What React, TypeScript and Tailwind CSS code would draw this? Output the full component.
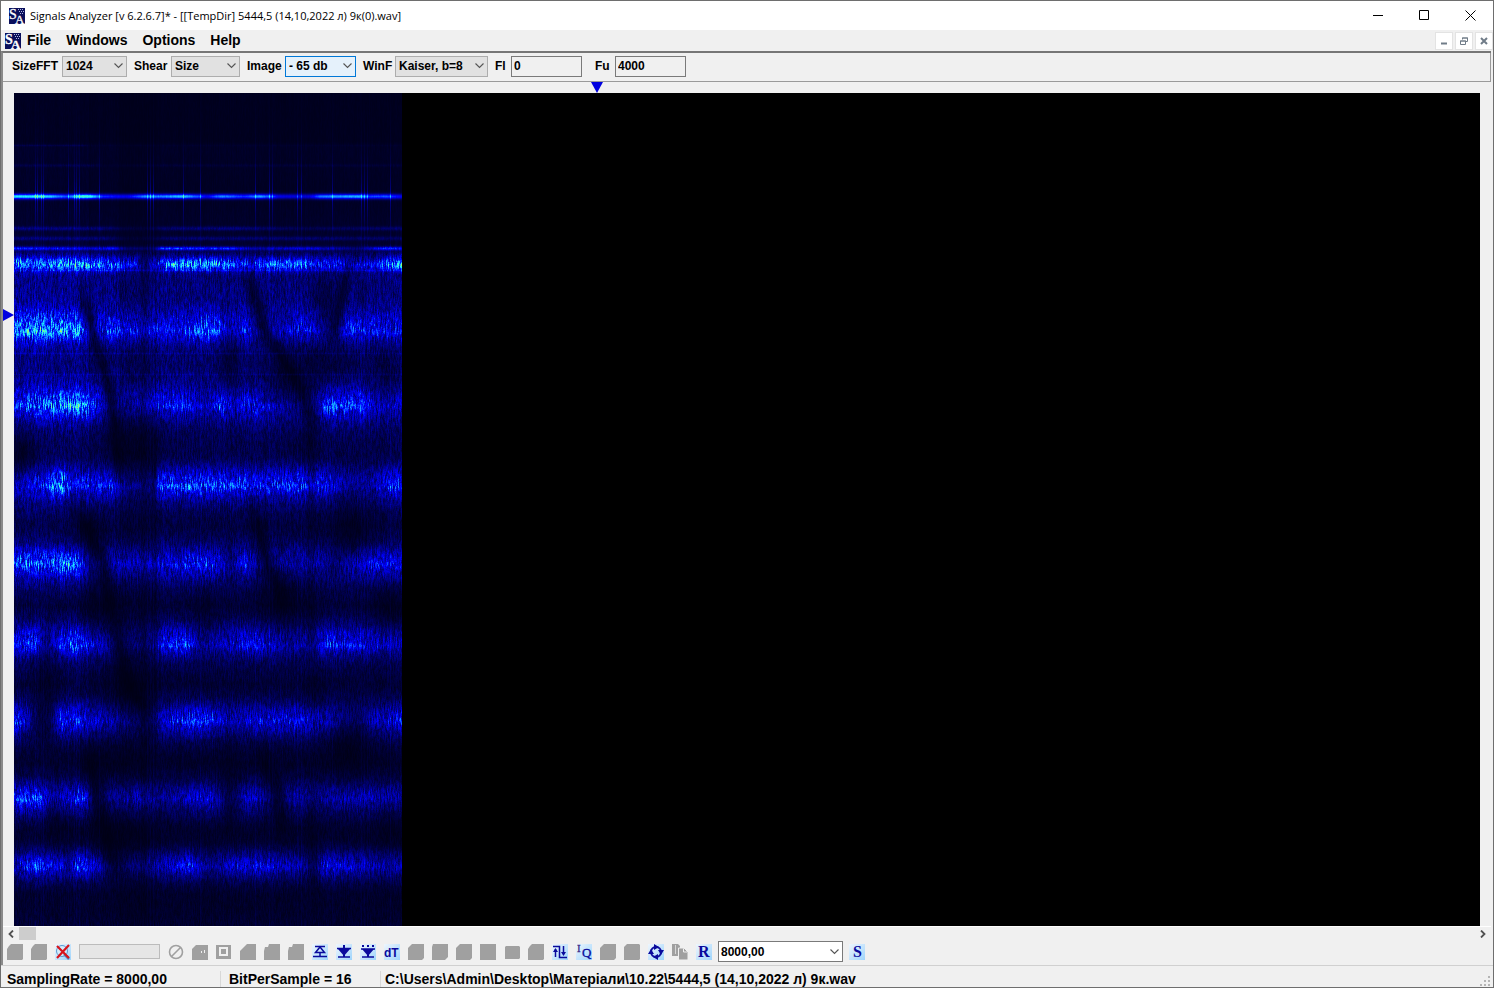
import { useEffect, useRef, type ReactNode } from "react";

type Point = [number, number];

interface Band {
  y: number;
  up: number;
  down: number;
  ridge: number;
  amp: Point[];
}

const VIEW_W = 388;
const VIEW_H = 833;

// level of the background over the height of the view
const FLOOR: Point[] = [
  [0, 0.03], [48, 0.03], [52, 0.045], [100, 0.04], [150, 0.06], [160, 0.12], [175, 0.2], [215, 0.2],
  [260, 0.17], [300, 0.19], [345, 0.13], [365, 0.1], [385, 0.17], [415, 0.13], [432, 0.09], [455, 0.15],
  [490, 0.13], [512, 0.07], [540, 0.14], [575, 0.1], [590, 0.07], [620, 0.13], [655, 0.07], [670, 0.05],
  [700, 0.12], [735, 0.05], [750, 0.05], [775, 0.1], [800, 0.05], [815, 0.05], [833, 0.06],
];

const BANDS: Band[] = [
  { y: 170, up: 7, down: 7, ridge: 3, amp: [[0, 0.7], [20, 0.56], [40, 0.66], [85, 0.64], [100, 0.46], [122, 0.38], [130, 0.1], [142, 0.3], [155, 0.64], [185, 0.72], [215, 0.56], [235, 0.36], [260, 0.56], [290, 0.52], [325, 0.46], [335, 0.22], [360, 0.3], [372, 0.64], [388, 0.66]] },
  { y: 236, up: 19, down: 14, ridge: 4, amp: [[0, 0.54], [30, 0.6], [68, 0.54], [78, 0.25], [90, 0.36], [100, 0.38], [118, 0.36], [150, 0.28], [170, 0.36], [190, 0.52], [205, 0.48], [215, 0.2], [232, 0.36], [245, 0.06], [270, 0.26], [300, 0.36], [312, 0.1], [322, 0.04], [332, 0.36], [360, 0.36], [388, 0.3]] },
  { y: 311, up: 17, down: 17, ridge: 3, amp: [[0, 0.34], [20, 0.46], [45, 0.58], [70, 0.56], [85, 0.36], [100, 0.14], [132, 0.34], [165, 0.38], [190, 0.18], [208, 0.42], [220, 0.22], [240, 0.4], [285, 0.14], [302, 0.2], [310, 0.46], [345, 0.44], [362, 0.22], [388, 0.24]] },
  { y: 391, up: 18, down: 16, ridge: 3, amp: [[0, 0.2], [15, 0.3], [32, 0.34], [37, 0.6], [48, 0.64], [58, 0.24], [75, 0.36], [95, 0.42], [110, 0.2], [140, 0.12], [144, 0.5], [175, 0.48], [210, 0.46], [240, 0.36], [280, 0.46], [310, 0.36], [335, 0.12], [360, 0.2], [372, 0.42], [388, 0.4]] },
  { y: 469, up: 14, down: 17, ridge: 3, amp: [[0, 0.54], [30, 0.48], [52, 0.68], [66, 0.52], [76, 0.12], [95, 0.24], [120, 0.32], [150, 0.32], [190, 0.46], [205, 0.34], [215, 0.1], [230, 0.38], [245, 0.12], [265, 0.22], [300, 0.28], [320, 0.06], [340, 0.28], [360, 0.42], [388, 0.34]] },
  { y: 550, up: 18, down: 14, ridge: 3, amp: [[0, 0.4], [20, 0.46], [32, 0.12], [42, 0.32], [60, 0.58], [72, 0.42], [95, 0.24], [110, 0.1], [130, 0.12], [150, 0.38], [168, 0.54], [185, 0.2], [210, 0.26], [245, 0.4], [275, 0.2], [300, 0.2], [308, 0.38], [335, 0.4], [388, 0.24]] },
  { y: 626, up: 15, down: 17, ridge: 3, amp: [[0, 0.5], [15, 0.3], [28, 0.04], [38, 0.08], [44, 0.46], [65, 0.42], [95, 0.28], [122, 0.16], [135, 0.04], [145, 0.3], [185, 0.54], [215, 0.26], [250, 0.34], [290, 0.38], [320, 0.2], [345, 0.06], [358, 0.26], [388, 0.4]] },
  { y: 704, up: 14, down: 17, ridge: 3, amp: [[0, 0.52], [25, 0.5], [38, 0.16], [55, 0.34], [70, 0.5], [80, 0.06], [105, 0.2], [125, 0.32], [145, 0.14], [165, 0.22], [195, 0.4], [215, 0.08], [235, 0.3], [260, 0.06], [280, 0.2], [310, 0.16], [350, 0.26], [388, 0.22]] },
  { y: 771, up: 14, down: 15, ridge: 4, amp: [[0, 0.28], [20, 0.46], [40, 0.4], [54, 0.18], [66, 0.58], [78, 0.38], [95, 0.1], [125, 0.16], [150, 0.28], [175, 0.44], [195, 0.16], [215, 0.32], [250, 0.38], [290, 0.2], [302, 0.1], [308, 0.38], [345, 0.3], [388, 0.22]] },
];

// steady carriers: y, thickness, level along x
const CARRIERS: { y: number; s: number; amp: Point[] }[] = [
  { y: 103, s: 2.6, amp: [[0, 0.78], [25, 0.82], [38, 0.72], [52, 0.54], [68, 0.9], [76, 0.86], [88, 0.5], [112, 0.4], [130, 0.66], [148, 0.64], [168, 0.76], [185, 0.54], [192, 0.4], [206, 0.66], [230, 0.5], [245, 0.7], [258, 0.54], [264, 0.38], [295, 0.36], [306, 0.64], [345, 0.72], [355, 0.52], [372, 0.58], [388, 0.38]] },
  { y: 52, s: 1, amp: [[0, 0.05], [68, 0.06], [76, 0.01], [388, 0.01]] },
  { y: 72, s: 1.5, amp: [[0, 0.05], [75, 0.06], [90, 0.01], [160, 0.03], [388, 0.03]] },
  { y: 135, s: 2, amp: [[0, 0.16], [90, 0.13], [110, 0.04], [135, 0.04], [160, 0.14], [230, 0.14], [290, 0.06], [388, 0.12]] },
  { y: 145, s: 2, amp: [[0, 0.14], [90, 0.12], [110, 0.03], [135, 0.03], [160, 0.12], [388, 0.1]] },
  { y: 155, s: 1.8, amp: [[0, 0.38], [100, 0.32], [112, 0.1], [140, 0.08], [146, 0.46], [215, 0.42], [240, 0.18], [290, 0.3], [345, 0.1], [372, 0.46], [388, 0.34]] },
  { y: 177, s: 1, amp: [[0, 0.1], [388, 0.1]] },
  { y: 260, s: 1, amp: [[0, 0.1], [70, 0.08], [388, 0.04]] },
  { y: 281, s: 1, amp: [[0, 0.08], [70, 0.06], [388, 0.04]] },
];

// fading paths: points, half width, depth
const FADES: { pts: Point[]; w: number; d: number }[] = [
  { pts: [[68, 197], [79, 244], [93, 287], [100, 330], [104, 380]], w: 7, d: 0.7 },
  { pts: [[62, 414], [80, 450], [89, 470], [99, 524], [109, 577], [129, 620]], w: 9, d: 0.65 },
  { pts: [[74, 660], [82, 700], [90, 735], [103, 785]], w: 9, d: 0.6 },
  { pts: [[234, 180], [249, 234], [266, 262], [286, 294], [299, 335]], w: 8, d: 0.65 },
  { pts: [[239, 414], [253, 470], [268, 506]], w: 8, d: 0.65 },
  { pts: [[246, 655], [262, 697], [270, 740]], w: 9, d: 0.55 },
  { pts: [[334, 175], [319, 240]], w: 6, d: 0.6 },
  { pts: [[347, 185], [348, 225]], w: 4, d: 0.4 },
  { pts: [[129, 152], [129, 830]], w: 4, d: 0.3 },
  { pts: [[140, 330], [140, 640]], w: 3, d: 0.3 },
  { pts: [[296, 340], [297, 560]], w: 5, d: 0.3 },
  { pts: [[297, 700], [297, 790]], w: 5, d: 0.3 },
];

// soft dark areas: x, y, radius x, radius y, depth
const HOLES: [number, number, number, number, number][] = [
  [215, 270, 11, 30, 0.55], [275, 285, 32, 32, 0.6], [312, 205, 15, 32, 0.55], [318, 270, 32, 22, 0.45],
  [372, 280, 16, 26, 0.45], [120, 350, 32, 38, 0.55], [6, 360, 18, 24, 0.7], [290, 350, 14, 18, 0.4],
  [75, 440, 20, 24, 0.5], [336, 436, 24, 30, 0.65], [268, 504, 26, 32, 0.65], [82, 515, 18, 32, 0.55],
  [376, 515, 20, 24, 0.55], [30, 590, 14, 34, 0.5], [112, 600, 26, 30, 0.55], [334, 655, 24, 28, 0.6],
  [26, 630, 12, 26, 0.5], [90, 665, 28, 22, 0.4], [215, 690, 12, 40, 0.4], [46, 732, 16, 18, 0.4],
  [100, 740, 26, 26, 0.4], [378, 735, 14, 20, 0.4], [190, 520, 14, 26, 0.35], [300, 600, 12, 22, 0.35],
];

const RAYS = [21, 23, 27, 29, 54, 60, 62, 65, 85, 133, 136, 139, 169, 186, 241, 255, 258, 283, 287, 318, 347, 350, 353, 376];

function lerp(pts: Point[], t: number) {
  if (t <= pts[0][0]) return pts[0][1];
  for (let i = 1; i < pts.length; i++) {
    if (t <= pts[i][0]) {
      const [a, va] = pts[i - 1];
      const [b, vb] = pts[i];
      return va + ((vb - va) * (t - a)) / (b - a);
    }
  }
  return pts[pts.length - 1][1];
}

function hash(x: number, y: number) {
  let h = Math.imul(x + 11, 374761393) ^ Math.imul(y + 7, 668265263);
  h = Math.imul(h ^ (h >>> 13), 1274126177);
  h = Math.imul(h ^ (h >>> 15), 2246822519);
  return ((h ^ (h >>> 16)) >>> 0) / 4294967296;
}

// noise that runs in short vertical strokes
function stroke(x: number, y: number) {
  const t = (y + hash(x, 77) * 5) / 3.5;
  const i = Math.floor(t);
  const f = t - i;
  return hash(x, 2000 + i) * (1 - f) + hash(x, 2001 + i) * f;
}

function shade(x: number, y: number) {
  let k = 1;
  for (const f of FADES) {
    const top = f.pts[0][1];
    const end = f.pts[f.pts.length - 1][1];
    if (y < top - 16 || y > end + 16) continue;
    const cx = lerp(f.pts.map(([px, py]) => [py, px] as Point), y);
    const edge = Math.min(1, (y - top + 16) / 32, (end + 16 - y) / 32);
    k *= 1 - f.d * edge * Math.exp(-(((x - cx) / f.w) ** 2));
  }
  for (const [hx, hy, rx, ry, d] of HOLES) {
    const q = ((x - hx) / rx) ** 2 + ((y - hy) / ry) ** 2;
    if (q < 6) k *= 1 - d * Math.exp(-q);
  }
  return k;
}

function palette(v: number): [number, number, number] {
  if (v < 0.48) return [0, 0, 16 + (v / 0.48) * 239];
  if (v < 0.85) {
    const t = (v - 0.48) / 0.37;
    return [t * 30, t * 240, 255];
  }
  const t = Math.min(1, (v - 0.85) / 0.3);
  return [30 + t * 150, 245, 255 - t * 170];
}

function drawSpectrum(ctx: CanvasRenderingContext2D) {
  const img = ctx.createImageData(VIEW_W, VIEW_H);
  for (let x = 0; x < VIEW_W; x++) {
    const amps = BANDS.map((b) => lerp(b.amp, x));
    const lines = CARRIERS.map((c) => lerp(c.amp, x));
    const column = 0.88 + 0.24 * hash(x, 9001);
    const ray = RAYS.includes(x) ? 1 : 0;
    const left = x < 75 ? 1.2 : x > 104 && x < 142 ? 0.8 : 1;
    for (let y = 0; y < VIEW_H; y++) {
      const grain = 0.75 * stroke(x, y) + 0.25 * hash(x, y);
      let v = lerp(FLOOR, y) * left;
      BANDS.forEach((b, i) => {
        const d = y - b.y;
        if (Math.abs(d) > 60) return;
        const s = d < 0 ? b.up : b.down;
        v += amps[i] * (0.67 * Math.exp(-((d / s) ** 2)) + 0.16 * Math.exp(-(((d - 2) / b.ridge) ** 2)));
      });
      const noisy = y > 158 ? 0.35 + 1.3 * grain : 0.75 + 0.5 * grain;
      v *= shade(x, y) * noisy * column;
      CARRIERS.forEach((c, i) => {
        const q = ((y - c.y) / c.s) ** 2;
        if (q < 8) v += lines[i] * Math.exp(-q) * (i === 0 ? 0.95 + 0.1 * grain : 0.6 + 0.8 * grain);
      });
      if (ray) v += 0.22 * Math.exp(-Math.abs(y - 103) / 24);
      if (ray && y > 150) v += 0.03;
      const [r, g, b] = palette(v);
      const o = (y * VIEW_W + x) * 4;
      img.data[o] = r;
      img.data[o + 1] = g;
      img.data[o + 2] = b;
      img.data[o + 3] = 255;
    }
  }
  ctx.putImageData(img, 0, 0);
}

function Spectrogram() {
  const ref = useRef<HTMLCanvasElement>(null);
  useEffect(() => {
    const ctx = ref.current?.getContext("2d");
    if (ctx) drawSpectrum(ctx);
  }, []);
  return <canvas ref={ref} width={VIEW_W} height={VIEW_H} className="block h-full w-[388px]" />;
}

function AppLogo() {
  return (
    <svg viewBox="0 0 16 16" className="size-4 shrink-0" aria-hidden="true">
      <rect width="16" height="16" fill="#0a0f5c" />
      <text x="0" y="11" fontFamily="Liberation Serif, serif" fontSize="14" fill="#fff" stroke="#fff" strokeWidth=".3">S</text>
      <text x="6" y="16" fontFamily="Liberation Serif, serif" fontSize="13" fill="#fff" stroke="#fff" strokeWidth=".3">A</text>
      <path d="M9 1h1M11 1h1M13 1h1M10 3h1M12 3h1M14 3h1M11 5h1M13 5h1" transform="translate(0 .5)" stroke="#b0b5e0" />
    </svg>
  );
}

function Chevron() {
  return (
    <svg viewBox="0 0 9 6" className="pointer-events-none absolute right-1 top-1/2 h-1.5 w-[9px] -translate-y-1/2" aria-hidden="true">
      <path d="M.5.5l4 4 4-4" fill="none" stroke="#555" strokeWidth="1.1" />
    </svg>
  );
}

function Combo({ id, label, value, labelClass, boxClass }: { id: string; label: string; value: string; labelClass: string; boxClass: string }) {
  return (
    <div className="flex items-center">
      <label htmlFor={id} className={labelClass}>{label}</label>
      <div className="relative">
        <select id={id} defaultValue={value} className={`block h-[21px] appearance-none border pl-[3px] font-bold outline-none ${boxClass}`}>
          <option>{value}</option>
        </select>
        <Chevron />
      </div>
    </div>
  );
}

function Field({ id, label, value, labelClass }: { id: string; label: string; value: string; labelClass: string }) {
  return (
    <div className="flex items-center">
      <label htmlFor={id} className={labelClass}>{label}</label>
      <input id={id} defaultValue={value} className="block h-[21px] w-[71px] border border-[#7a7a7a] bg-[#f0f0f0] pl-[2px] font-bold outline-none" />
    </div>
  );
}

function Tool({ name, on, children }: { name: string; on?: boolean; children: ReactNode }) {
  return (
    <button type="button" aria-label={name} disabled={!on} className={on ? "size-4 shrink-0 bg-linear-to-br from-[#eef6fd] to-[#9fd4fb]" : "size-4 shrink-0"}>
      <svg viewBox="0 0 16 16" className="block size-4" fill="none">{children}</svg>
    </button>
  );
}

const G = "#a0a0a0";
const N = "#0a0a9c";

const doc = <path d="M4 0h12v15l-1 1H0V5l2-3z" fill={G} />;
const rounded = <path d="M4 0h12v14l-2 2H0V4z" fill={G} />;
const cut = <path d="M7 0h9v16H0V7z" fill={G} />;
const tabbed = <path d="M5 0h11v16H0V7l1-4h3z" fill={G} />;

const TOOLS: { name: string; on?: boolean; icon: ReactNode }[] = [
  { name: "Stop", icon: <><circle cx="8" cy="8" r="6.5" stroke={G} strokeWidth="1.6" /><path d="M3.500 12.500l9-9" stroke={G} strokeWidth="1.600" /></> },
  { name: "Marker", icon: <><path d="M4 1h12v15H0V5z" fill={G} /><path d="M9.500 7v2M12.500 6v3" stroke="#f0f0f0" /></> },
  { name: "Frame", icon: <><path d="M0 1h15v14H0z" fill={G} /><path d="M4 4h7v7H4z" stroke="#f0f0f0" strokeWidth="2" /></> },
  { name: "Ramp", icon: cut },
  { name: "Folder", icon: tabbed },
  { name: "Folder 2", icon: tabbed },
  { name: "Peak up", on: true, icon: <><path d="M3 2.500h10M1 12.500h14M8 9v4" stroke={N} strokeWidth="1.500" /><path d="M8 3l4.500 5.500h-9z" stroke={N} strokeWidth="1.500" /></> },
  { name: "Peak down", on: true, icon: <><path d="M1 4.500h14M2 13h12" stroke={N} strokeWidth="1.600" /><path d="M2 5h12l-6 7z" fill={N} /><path d="M8 1v12" stroke={N} strokeWidth="2" /></> },
  { name: "Peak down dotted", on: true, icon: <><path d="M1 5h14M2 13h12" stroke={N} strokeWidth="1.600" /><path d="M2 2h2M7 2h2M12 2h2" stroke={N} strokeWidth="2" /><path d="M2 5h12l-6 7z" fill={N} /><path d="M8 5v8" stroke={N} strokeWidth="2" /></> },
  { name: "dT", on: true, icon: <text x="0" y="13" fontFamily="Liberation Sans, sans-serif" fontSize="12" fontWeight="700" fill={N}>dT</text> },
  { name: "Tool 1", icon: rounded },
  { name: "Tool 2", icon: <path d="M1 0h15v13l-3 3H0V3z" fill={G} /> },
  { name: "Tool 3", icon: rounded },
  { name: "Tool 4", icon: <path d="M0 0h16v16H0z" fill={G} /> },
  { name: "Tool 5", icon: <path d="M2 2h13l1 1v11l-1 1H1V3z" fill={G} /> },
  { name: "Tool 6", icon: doc },
  { name: "Swap", on: true, icon: <><path d="M3.500 5v8M1 2.500h6.500v11H15M11.500 2v8" stroke={N} strokeWidth="1.500" /><path d="M1 8l2.500-4L6 8zM9 8l2.500 4L14 8z" fill={N} /></> },
  { name: "IQ", on: true, icon: <><text x="1" y="8" fontFamily="Liberation Serif, serif" fontSize="11" fill="#3b2a86" stroke="#3b2a86" strokeWidth=".3">I</text><text x="6" y="13" fontFamily="Liberation Serif, serif" fontSize="13" fill={N} stroke={N} strokeWidth=".3">Q</text></> },
  { name: "Tool 7", icon: rounded },
  { name: "Tool 8", icon: <path d="M3 0h12l1 1v14l-1 1H0V3z" fill={G} /> },
  { name: "Refresh", on: true, icon: <><circle cx="8" cy="8" r="5" stroke={N} strokeWidth="2" /><path d="M6 0l5 3-5 3zM16 6l-3 5-3-5zM10 10v6l-5-3zM0 10l3-5 3 5z" fill={N} /></> },
  { name: "Copy", icon: <><path d="M0 0h6l2 2v10H0z" fill={G} /><path d="M6.500 4H12l4 4v8H6.500z" fill={G} stroke="#f0f0f0" /><path d="M11.500 4.500V8H15" stroke="#f0f0f0" /><path d="M3.500 1v9" stroke="#f0f0f0" strokeWidth=".7" /></> },
  { name: "Resample", on: true, icon: <text x="2" y="13" fontFamily="Liberation Serif, serif" fontSize="16" fontWeight="700" fill={N}>R</text> },
];

export default function App() {
  return (
    <div className="flex h-screen flex-col border border-[#6e6e6e] bg-[#f0f0f0] font-['Liberation_Sans',Arial,sans-serif] text-black">
      <header className="flex h-[29px] shrink-0 items-center bg-white pl-2">
        <AppLogo />
        <h1 className="ml-[5px] flex-1 whitespace-nowrap font-['Open_Sans','Noto_Sans',sans-serif] text-[11px] leading-4">
          Signals Analyzer [v 6.2.6.7]* - [[TempDir] 5444,5 (14,10,2022 л) 9к(0).wav]
        </h1>
        <button type="button" aria-label="Minimize" className="grid h-full w-[46px] place-items-center">
          <svg viewBox="0 0 11 11" className="size-[11px]"><path d="M0 5.500h10" stroke="#000" /></svg>
        </button>
        <button type="button" aria-label="Maximize" className="grid h-full w-[46px] place-items-center">
          <svg viewBox="0 0 11 11" className="size-[11px]"><path d="M.5.5h9v9h-9z" fill="none" stroke="#000" /></svg>
        </button>
        <button type="button" aria-label="Close" className="grid h-full w-[46px] place-items-center">
          <svg viewBox="0 0 11 11" className="size-[11px]"><path d="M.5.5l10 10M10.500.5l-10 10" stroke="#000" /></svg>
        </button>
      </header>

      <nav className="flex h-[21px] shrink-0 items-center pl-1 text-[14px] font-bold leading-4">
        <AppLogo />
        <div className="ml-1.5 flex flex-1 gap-[15px] pb-0.5">
          <button type="button">File</button>
          <button type="button">Windows</button>
          <button type="button">Options</button>
          <button type="button">Help</button>
        </div>
        <div className="flex gap-[2px]">
          <button type="button" aria-label="Minimize child" className="grid h-[18px] w-[18px] place-items-center border border-[#e3e3e3] bg-white">
            <svg viewBox="0 0 8 8" className="size-2"><path d="M1 6.500h6" stroke="#707c88" strokeWidth="2" /></svg>
          </button>
          <button type="button" aria-label="Restore child" className="grid h-[18px] w-[18px] place-items-center border border-[#e3e3e3] bg-white">
            <svg viewBox="0 0 8 8" className="size-2"><path d="M2.500 2.500V1h5v3.500H6M.5 4h5v3.500h-5zM0 4h6M2 1h6" fill="none" stroke="#707c88" /></svg>
          </button>
          <button type="button" aria-label="Close child" className="grid h-[18px] w-[18px] place-items-center border border-[#e3e3e3] bg-white">
            <svg viewBox="0 0 8 8" className="size-2"><path d="M1 1l6 6M7 1L1 7" stroke="#707c88" strokeWidth="2" /></svg>
          </button>
        </div>
      </nav>

      <main className="mr-[2px] flex min-h-0 flex-1 flex-col border-l-2 border-t-2 border-l-[#8a8a8a] border-t-[#767676]">
        <form className="flex h-[29px] shrink-0 items-center gap-[7px] border-b border-r border-[#9a9a9a] pb-0.5 pl-[9px] text-[12px] font-bold leading-4">
          <Combo id="fft" label="SizeFFT" value="1024" labelClass="w-[50px]" boxClass="w-[65px] border-[#adadad] bg-[#e1e1e1]" />
          <Combo id="shear" label="Shear" value="Size" labelClass="w-[37px]" boxClass="w-[69px] border-[#adadad] bg-[#e1e1e1]" />
          <Combo id="image" label="Image" value="- 65 db" labelClass="w-[38px]" boxClass="w-[71px] border-[#0078d7] bg-[#e5f1fb]" />
          <Combo id="win" label="WinF" value="Kaiser, b=8" labelClass="w-8" boxClass="w-[93px] border-[#adadad] bg-[#e1e1e1]" />
          <Field id="fl" label="Fl" value="0" labelClass="w-4" />
          <Field id="fu" label="Fu" value="4000" labelClass="ml-1.5 w-5" />
        </form>

        <div className="relative h-[11px] shrink-0">
          <svg viewBox="0 0 12 11" className="absolute left-[588px] top-0 h-[11px] w-3" aria-hidden="true"><path d="M0 0h12L6 11z" fill="#0000e0" /></svg>
        </div>
        <div className="flex min-h-0 flex-1 pr-[11px]">
          <div className="relative w-[11px] shrink-0">
            <svg viewBox="0 0 11 12" className="absolute left-0 top-[216px] h-3 w-[11px]" aria-hidden="true"><path d="M0 0l11 6L0 12z" fill="#0000e0" /></svg>
          </div>
          <div className="min-w-0 flex-1 bg-black">
            <Spectrogram />
          </div>
        </div>

        <div className="flex h-3.5 shrink-0 items-center justify-between border-t border-white px-1">
          <div className="flex items-center gap-1">
            <svg viewBox="0 0 8 8" className="size-2" aria-hidden="true"><path d="M6 .5L2.500 4 6 7.500" fill="none" stroke="#505050" strokeWidth="1.800" /></svg>
            <div className="h-[13px] w-[17px] bg-[#cdcdcd]" />
          </div>
          <svg viewBox="0 0 8 8" className="size-2" aria-hidden="true"><path d="M2 .5L5.500 4 2 7.500" fill="none" stroke="#505050" strokeWidth="1.800" /></svg>
        </div>

        <div className="flex h-[25px] shrink-0 items-center gap-2 pb-0.5 pl-1">
          <Tool name="Open">{doc}</Tool>
          <Tool name="Save">{doc}</Tool>
          <Tool name="Delete" on>
            <circle cx="7" cy="7" r="5.500" fill="#d5ecfb" stroke="#5b9bd0" />
            <path d="M9 10l5 5" stroke="#5b86b8" strokeWidth="2.500" />
            <path d="M2 2l12 12M14 1L2 14" stroke="#d8141c" strokeWidth="2.200" />
          </Tool>
          <div className="h-[15px] w-[81px] shrink-0 border border-[#bcbcbc] bg-[#e6e6e6]" />
          {TOOLS.map((t) => (
            <Tool key={t.name} name={t.name} on={t.on}>{t.icon}</Tool>
          ))}
          <div className="relative -mx-0.5">
            <select aria-label="Sampling rate" defaultValue="8000,00" className="block h-[21px] w-[125px] appearance-none border border-[#7a7a7a] bg-white pl-[2px] text-[12px] font-bold leading-4 outline-none">
              <option>8000,00</option>
            </select>
            <Chevron />
          </div>
          <Tool name="Set" on>
            <text x="4" y="13" fontFamily="Liberation Serif, serif" fontSize="16" fontWeight="700" fill={N}>S</text>
          </Tool>
        </div>
      </main>

      <footer className="flex h-[22px] shrink-0 items-center border-t border-[#d0d0d0] pt-1 text-[14px] font-bold leading-4">
        <span className="w-[220px] border-r border-[#d8d8d8] pl-1.5">SamplingRate = 8000,00</span>
        <span className="w-[160px] border-r border-[#d8d8d8] pl-2">BitPerSample = 16</span>
        <span className="flex-1 pl-1">C:\Users\Admin\Desktop\Матеріали\10.22\5444,5 (14,10,2022 л) 9к.wav</span>
        <svg viewBox="0 0 11 11" className="mr-0.5 size-[11px] self-end" aria-hidden="true">
          <path d="M8 1h2M4 5h2M8 5h2M0 9h2M4 9h2M8 9h2" stroke="#b4b4b4" strokeWidth="2" />
        </svg>
      </footer>
    </div>
  );
}
